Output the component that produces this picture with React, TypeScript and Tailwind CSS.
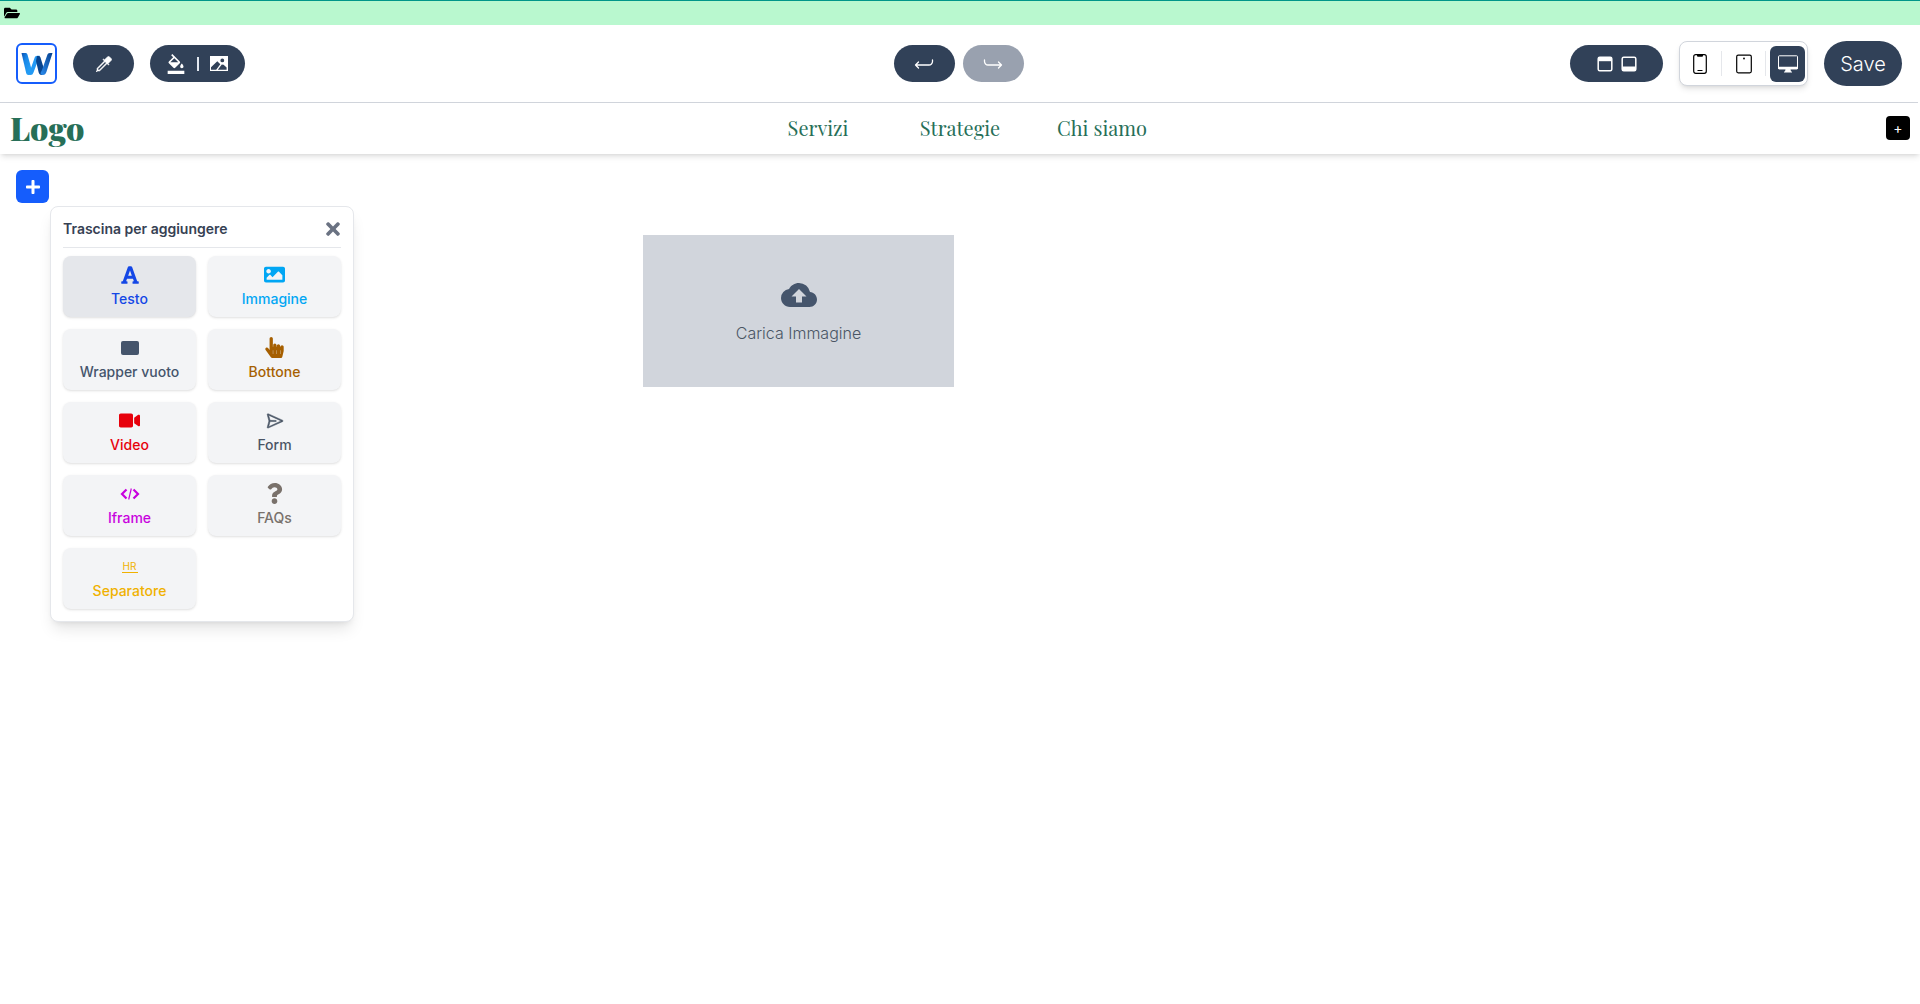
import { useState } from 'react';
import type { ReactNode } from 'react';
import { FaFolderOpen, FaFont, FaImage, FaHandPointer, FaVideo, FaQuestion, FaTimes, FaPlus } from 'react-icons/fa';
import { BsEyedropper } from 'react-icons/bs';
import { MdFormatColorFill, MdCloudUpload } from 'react-icons/md';
import { VscSend } from 'react-icons/vsc';

const LogoMark = () => (
  <svg viewBox="0 0 32 24" className="w-8 h-6">
    <defs>
      <linearGradient id="wLeft" x1="0" y1="0" x2="1" y2="1">
        <stop offset="0" stopColor="#0a4fb0" />
        <stop offset="0.35" stopColor="#1787e8" />
        <stop offset="1" stopColor="#2aa8fb" />
      </linearGradient>
      <linearGradient id="wRight" x1="0" y1="1" x2="1" y2="0">
        <stop offset="0" stopColor="#2b8df0" />
        <stop offset="1" stopColor="#063f8c" />
      </linearGradient>
    </defs>
    <path d="M.5 1h3.800c1.200 0 1.900.6 2.300 1.900L10.500 17l-1 4.500c-.4 1-1 1.500-2 1.500-1.400 0-2-.8-2.400-2.200z" fill="url(#wLeft)" />
    <path d="M13.500 6c.5-1.500 1.300-2.300 2.800-2.300h2.400L12.500 20.500C11.900 22.200 11 23 9.500 23 8 23 7.500 22 7.500 21l2.500-5z" fill="#2299f4" />
    <path d="M16 4h1.500c1.100 0 1.700.5 2 1.600L23 17l-.5 4c-.5 1.500-1 2-2 2-1.500 0-2.300-.7-2.800-2.400L15 9z" fill="#08458f" />
    <path d="M26.200 3.300C26.700 1.700 27.400 1 29 1h2.500L25.400 20c-.7 2.100-1.700 3-3.500 3-1.500 0-2.200-.6-2.400-1.900l1.500-3.100z" fill="url(#wRight)" />
  </svg>
);

const PictureIcon = () => (
  <svg viewBox="0 0 18 15" className="w-[18px] h-[15px]" fill="currentColor">
    <path fillRule="evenodd" d="M0 0h18v15H0zM1 13.800h5.200L10.300 8.300 7.300 5.300 1 11.300zM7.800 13.800h8.800v-2.300l-3-2.800-1.800-.2zM12.300 2.500a1.900 1.900 0 1 0 0 3.800 1.900 1.900 0 0 0 0-3.800z" />
  </svg>
);

const ReturnArrow = ({ flipped }: { flipped?: boolean }) => (
  <svg
    viewBox="0 0 20 10"
    className={flipped ? 'w-5 h-2.5 -scale-x-100' : 'w-5 h-2.5'}
    fill="none"
    stroke="currentColor"
    strokeLinecap="round"
    strokeLinejoin="round"
  >
    <path d="M18.500 1v1.500a3.500 3.500 0 0 1-3.500 3.500H1.500M4.500 3l-3 3 3 3" strokeWidth="1.300" />
  </svg>
);

const DockIcon = ({ bottom }: { bottom?: boolean }) => (
  <svg viewBox="0 0 16 16" className="w-4 h-4" fill="none" stroke="currentColor">
    <rect x="1.200" y="1.200" width="13.600" height="13.600" rx="1.500" strokeWidth="1.500" />
    <path d={bottom ? 'M1.200 10.500h13.600v4H1.200z' : 'M1.200 1.200h13.600v4H1.200z'} fill="currentColor" stroke="none" />
  </svg>
);

const PhoneIcon = () => (
  <svg viewBox="0 0 14 20" className="w-3.5 h-5" fill="none" stroke="currentColor">
    <rect x="0.700" y="0.700" width="12.600" height="18.600" rx="2" strokeWidth="1.200" />
    <path d="M4 1h6v.8a1 1 0 0 1-1 1H5a1 1 0 0 1-1-1z" fill="currentColor" stroke="none" />
    <path d="M4.500 16.500h5" />
  </svg>
);

const TabletIcon = () => (
  <svg viewBox="0 0 16 20" className="w-4 h-5" fill="none" stroke="currentColor">
    <rect x="0.700" y="1.200" width="14.600" height="17.600" rx="1.500" strokeWidth="1.200" />
    <circle cx="8" cy="4.500" r="0.900" fill="currentColor" stroke="none" />
  </svg>
);

const MonitorIcon = () => (
  <svg viewBox="0 0 22 18" className="w-[22px] h-[18px]" fill="none" stroke="currentColor">
    <rect x="1.500" y="0.800" width="19" height="13" rx="0.800" />
    <path d="M1 11.800h20v1.500a1 1 0 0 1-1 1H2a1 1 0 0 1-1-1zM8.500 14.300h5l.5 2.200h1v1H7v-1h1z" fill="currentColor" stroke="none" />
  </svg>
);

const WrapperIcon = () => (
  <svg viewBox="0 0 18 14" className="w-[18px] h-3.5" fill="currentColor">
    <rect width="18" height="14" rx="2" />
  </svg>
);

const CodeIcon = () => (
  <svg viewBox="0 0 20 14" className="w-5 h-3.5" fill="none" stroke="currentColor">
    <path d="M6.500 2.500 2 7l4.500 4.500M13.500 2.500 18 7l-4.500 4.500" strokeWidth="2.200" />
    <path d="M11.300 1.500 8.700 12.500" strokeWidth="1.200" />
  </svg>
);

const HrIcon = () => (
  <span className="w-4 border-b border-current text-center text-[10px] leading-3 font-normal">HR</span>
);

interface Block {
  label: string;
  color: string;
  icon: ReactNode;
}

const blocks: Block[] = [
  { label: 'Testo', color: 'bg-gray-200 text-blue-700', icon: <FaFont className="w-5 h-5" /> },
  { label: 'Immagine', color: 'bg-gray-100 text-sky-500', icon: <FaImage className="w-[21px] h-[21px]" /> },
  { label: 'Wrapper vuoto', color: 'bg-gray-100 text-slate-600', icon: <WrapperIcon /> },
  { label: 'Bottone', color: 'bg-gray-100 text-yellow-700', icon: <FaHandPointer className="w-[21px] h-[21px]" /> },
  { label: 'Video', color: 'bg-gray-100 text-red-600', icon: <FaVideo className="w-[21px] h-[21px]" /> },
  { label: 'Form', color: 'bg-gray-100 text-gray-600', icon: <VscSend className="w-[18px] h-[18px]" strokeWidth={0.5} /> },
  { label: 'Iframe', color: 'bg-gray-100 text-fuchsia-600', icon: <CodeIcon /> },
  { label: 'FAQs', color: 'bg-gray-100 text-stone-500', icon: <FaQuestion className="w-[21px] h-[21px]" /> },
  { label: 'Separatore', color: 'bg-gray-100 text-yellow-500', icon: <HrIcon /> },
];

const Toolbar = () => {
  const [device, setDevice] = useState('desktop');

  const deviceClass = (name: string) =>
    device === name
      ? 'flex h-9 w-[35px] items-center justify-center rounded-md bg-slate-700 text-white'
      : 'flex h-9 w-[35px] items-center justify-center rounded-md text-black';

  return (
    <div className="mr-0.5 grid grid-cols-3 items-center border-b border-gray-300 px-4 py-4">
      <div className="flex items-center gap-4">
        <a href="#" aria-label="Home" className="flex h-[41px] w-[41px] items-center justify-center rounded-md border-2 border-blue-600 bg-white">
          <LogoMark />
        </a>
        <button aria-label="Colori" className="flex h-[37px] w-[61px] items-center justify-center rounded-full bg-slate-700 text-white">
          <BsEyedropper className="w-4 h-4" strokeWidth={0.5} />
        </button>
        <button aria-label="Sfondo" className="flex h-[37px] w-[95px] items-center justify-center gap-[11px] rounded-full bg-slate-700 pr-0.5 text-white">
          <MdFormatColorFill className="w-5 h-5" />
          <span className="h-3.5 w-0.5 bg-slate-200" />
          <PictureIcon />
        </button>
      </div>

      <div className="flex items-center justify-center gap-2">
        <button aria-label="Annulla" className="flex h-[37px] w-[61px] items-center justify-center rounded-full bg-slate-700 text-white">
          <ReturnArrow />
        </button>
        <button aria-label="Ripeti" className="flex h-[37px] w-[61px] items-center justify-center rounded-full bg-gray-400 text-white">
          <ReturnArrow flipped />
        </button>
      </div>

      <div className="flex items-center justify-end gap-4">
        <button aria-label="Header e footer" className="flex h-[37px] w-[93px] items-center justify-center gap-2 rounded-full bg-slate-700 text-white">
          <DockIcon />
          <DockIcon bottom />
        </button>
        <div className="flex h-[45px] items-center gap-1 rounded-lg border border-gray-300 bg-white px-0.5 shadow-md">
          <button aria-label="Telefono" onClick={() => setDevice('phone')} className={deviceClass('phone')}>
            <PhoneIcon />
          </button>
          <span className="h-[25px] w-px bg-gray-200" />
          <button aria-label="Tablet" onClick={() => setDevice('tablet')} className={deviceClass('tablet')}>
            <TabletIcon />
          </button>
          <span className="h-[25px] w-px bg-gray-200" />
          <button aria-label="Desktop" onClick={() => setDevice('desktop')} className={deviceClass('desktop')}>
            <MonitorIcon />
          </button>
        </div>
        <button className="h-[45px] w-[78px] rounded-full bg-slate-700 text-xl font-light text-white">Save</button>
      </div>
    </div>
  );
};

const SiteHeader = () => (
  <header className="grid min-h-[51px] grid-cols-[1fr_auto_1fr] items-center bg-white px-[10px] pb-0.5 font-['Playfair_Display','Liberation_Serif',serif] text-[#276f58] shadow-md">
    <a href="#" className="text-[32px] leading-10 font-black">Logo</a>
    <nav className="grid grid-cols-3 text-center text-xl">
      <a href="#" className="w-[142px]">Servizi</a>
      <a href="#" className="w-[142px]">Strategie</a>
      <a href="#" className="w-[142px]">Chi siamo</a>
    </nav>
    <button aria-label="Aggiungi voce" className="flex h-6 w-6 items-center justify-center justify-self-end rounded-sm bg-black font-['Inter',sans-serif] text-sm text-white">
      +
    </button>
  </header>
);

const BlockPicker = () => (
  <div className="w-[304px] rounded-lg border border-gray-200 bg-white px-3 pt-3 pb-3 shadow-lg">
    <div className="flex h-[29px] items-start justify-between border-b border-gray-200">
      <h3 className="text-sm font-semibold text-gray-700">Trascina per aggiungere</h3>
      <button aria-label="Chiudi" className="px-px text-gray-500">
        <FaTimes className="w-3.5 h-5" />
      </button>
    </div>
    <div className="grid grid-cols-2 gap-3 pt-2">
      {blocks.map((block) => (
        <button
          key={block.label}
          className={`flex h-[61px] flex-col items-center justify-center gap-1 rounded-lg text-sm font-medium shadow-sm ${block.color}`}
        >
          <span className="flex h-5 items-center">{block.icon}</span>
          {block.label}
        </button>
      ))}
    </div>
  </div>
);

export default function App() {
  return (
    <div className="min-h-screen bg-white font-['Inter','Liberation_Sans',sans-serif]">
      <div className="flex h-[25px] items-center border-t border-teal-600 bg-[#b9f8cf] pl-1">
        <FaFolderOpen className="w-4 h-4" />
      </div>
      <Toolbar />
      <SiteHeader />

      <main className="flex items-start px-4 pt-4">
        <div>
          <button aria-label="Aggiungi elemento" className="flex h-[33px] w-[33px] items-center justify-center rounded-md bg-blue-600 text-white">
            <FaPlus className="w-4 h-4" />
          </button>
          <div className="mt-[3px] ml-[34px]">
            <BlockPicker />
          </div>
        </div>
        <button className="mt-[65px] ml-[289px] flex h-[152px] w-[311px] flex-col items-center justify-center bg-[#d1d5dc] font-light text-gray-600">
          <MdCloudUpload className="mb-2 w-9 h-9 text-slate-600" />
          Carica Immagine
        </button>
      </main>
    </div>
  );
}
